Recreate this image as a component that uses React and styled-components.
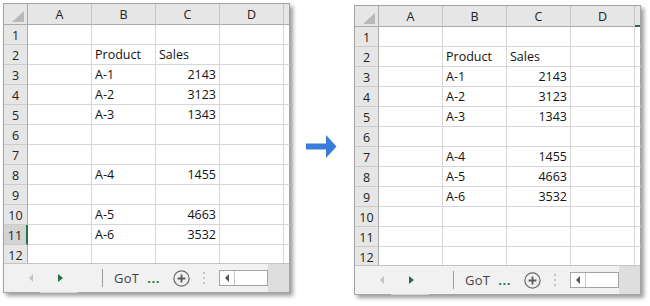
import React from "react";
import styled, { createGlobalStyle, css } from "styled-components";

const GlobalStyle = createGlobalStyle`
  body {
    margin: 0;
    background: #fff;
  }
`;

const Page = styled.div`
  width: 650px;
  height: 306px;
  box-sizing: border-box;
  padding-left: 3px;
  display: flex;
  align-items: flex-start;
  overflow: hidden;
`;

const Sheet = styled.div`
  margin-top: ${p => p.$top}px;
  width: 287px;
  box-sizing: border-box;
  border: 1px solid #a3a3a3;
  background: #fff;
  box-shadow: 3px 3px 4px rgba(0, 0, 0, 0.38);
  font-family: "Open Sans", "Liberation Sans", sans-serif;
`;

const Grid = styled.div`
  display: grid;
  grid-template-columns: 24px repeat(4, 64px) 5px;
  grid-template-rows: 21px repeat(11, 20px) 18px;
`;

const Corner = styled.div`
  background: #e6e6e6;
  border-right: 1px solid #ababab;
  border-bottom: 1px solid #ababab;
  display: flex;
  align-items: flex-end;
  justify-content: flex-end;
  padding: 0 3px 2px 0;

  &::before {
    content: "";
    width: 12px;
    height: 11px;
    background: #b8b8b8;
    clip-path: polygon(100% 0, 100% 100%, 0 100%);
  }
`;

const ColHead = styled.div`
  background: #e6e6e6;
  border-right: 1px solid #c6c6c6;
  border-bottom: 1px solid #ababab;
  display: flex;
  align-items: center;
  justify-content: center;
  padding-top: 1px;
  font-size: 12.5px;
  color: #222;
  ${p =>
    p.$mark &&
    css`
      border-bottom: 2px solid #217346;
    `}
`;

const RowHead = styled.div`
  background: ${p => (p.$active ? "#d3d3d3" : "#e6e6e6")};
  border-right: ${p => (p.$active ? "2px solid #217346" : "1px solid #ababab")};
  border-bottom: ${p => (p.$last ? "none" : "1px solid #cbcbcb")};
  display: flex;
  align-items: center;
  justify-content: center;
  padding-top: 2px;
  font-size: 12.5px;
  color: #222;
`;

const Cell = styled.div`
  border-right: ${p => (p.$edge ? "none" : "1px solid #d6d6d6")};
  border-bottom: ${p => (p.$last ? "none" : "1px solid #d6d6d6")};
  display: flex;
  align-items: flex-end;
  justify-content: ${p => (p.$num ? "flex-end" : "flex-start")};
  padding: 0 3px 2px 3px;
  font-size: 12.5px;
  line-height: 15px;
  color: #111;
  white-space: nowrap;
  overflow: visible;
`;

const TabBar = styled.div`
  position: relative;
  height: 29px;
  box-sizing: border-box;
  border-top: 1px solid #c3c3c3;
  background: #f1f1f1;
  display: flex;
  align-items: center;

  &::after {
    content: "";
    position: absolute;
    left: 36px;
    bottom: -1px;
    width: 38px;
    height: 1px;
    background: #d4d4d4;
  }
`;

const Nav = styled.div`
  width: 98px;
  display: flex;
  align-items: center;
  padding-left: 25px;
  gap: 25px;
  box-sizing: border-box;
`;

const ArrowLeft = styled.span`
  width: 0;
  height: 0;
  border-top: 4px solid transparent;
  border-bottom: 4px solid transparent;
  border-right: 4px solid #c4c4c4;
`;

const ArrowRight = styled.span`
  width: 0;
  height: 0;
  border-top: 4px solid transparent;
  border-bottom: 4px solid transparent;
  border-left: 5px solid #217346;
`;

const Divider = styled.span`
  width: 1px;
  height: 18px;
  background: #9c9c9c;
`;

const TabName = styled.span`
  margin-left: 11px;
  font-size: 13px;
  color: #444;
  letter-spacing: 0.3px;
`;

const More = styled.span`
  margin-left: 8px;
  font-size: 13px;
  font-weight: 700;
  color: #217346;
  letter-spacing: 0.5px;
`;

const AddButton = styled.svg`
  margin-left: 13px;
  flex: none;
`;

const VDots = styled.span`
  margin-left: 13px;
  display: flex;
  flex-direction: column;
  gap: 3px;

  i {
    display: block;
    width: 2px;
    height: 2px;
    background: #c8c8c8;
  }
`;

const ScrollBox = styled.div`
  margin-left: 14px;
  width: 49px;
  height: 16px;
  box-sizing: border-box;
  border: 1px solid #a5a5a5;
  background: #fff;
  display: flex;
`;

const ScrollArrow = styled.div`
  width: 14px;
  border-right: 1px solid #c8c8c8;
  display: flex;
  align-items: center;
  justify-content: center;

  &::before {
    content: "";
    border-top: 4px solid transparent;
    border-bottom: 4px solid transparent;
    border-right: 4px solid #555;
  }
`;

const Fill = styled.div`
  flex: 1;
  align-self: stretch;
  background: #dedede;
  margin-left: ${p => p.$gap}px;
`;

const ArrowBox = styled.svg`
  margin: 132px 17px 0 16px;
  flex: none;
`;

const cols = ["A", "B", "C", "D"];

const before = {
  2: ["Product", "Sales"],
  3: ["A-1", 2143],
  4: ["A-2", 3123],
  5: ["A-3", 1343],
  8: ["A-4", 1455],
  10: ["A-5", 4663],
  11: ["A-6", 3532],
};

const after = {
  2: ["Product", "Sales"],
  3: ["A-1", 2143],
  4: ["A-2", 3123],
  5: ["A-3", 1343],
  7: ["A-4", 1455],
  8: ["A-5", 4663],
  9: ["A-6", 3532],
};

function Spreadsheet({ data, top, activeRow, markLast }) {
  const rows = Array.from({ length: 12 }, (_, i) => i + 1);
  return (
    <Sheet $top={top}>
      <Grid>
        <Corner />
        {cols.map(c => (
          <ColHead key={c}>{c}</ColHead>
        ))}
        <ColHead $mark={markLast} style={{ borderRight: "none" }} />
        {rows.map(r => {
          const v = data[r] || [];
          const last = r === 12;
          return (
            <React.Fragment key={r}>
              <RowHead $active={r === activeRow} $last={last}>
                {r}
              </RowHead>
              <Cell $last={last} />
              <Cell $last={last}>{v[0]}</Cell>
              <Cell $last={last} $num={typeof v[1] === "number"}>
                {v[1]}
              </Cell>
              <Cell $last={last} />
              <Cell $last={last} $edge />
            </React.Fragment>
          );
        })}
      </Grid>
      <TabBar>
        <Nav>
          <ArrowLeft />
          <ArrowRight />
        </Nav>
        <Divider />
        <TabName>GoT</TabName>
        <More>...</More>
        <AddButton width="17" height="17" viewBox="0 0 17 17">
          <circle cx="8.5" cy="8.5" r="7.6" fill="none" stroke="#6a6a6a" strokeWidth="1.2" />
          <path d="M8.5 4.6v7.8M4.6 8.5h7.8" stroke="#5a5a5a" strokeWidth="1.8" />
        </AddButton>
        <VDots>
          <i />
          <i />
          <i />
        </VDots>
        <ScrollBox>
          <ScrollArrow />
        </ScrollBox>
        <Fill $gap={0} />
      </TabBar>
    </Sheet>
  );
}

export default function App() {
  return (
    <>
      <GlobalStyle />
      <Page>
        <Spreadsheet data={before} top={3} activeRow={11} />
        <ArrowBox width="31" height="30" viewBox="0 0 31 30">
          <path d="M0 11.5h20V3l10.5 11.5L20 26v-8.5H0z" fill="#3a7bdb" />
        </ArrowBox>
        <Spreadsheet data={after} top={5} markLast />
      </Page>
    </>
  );
}
